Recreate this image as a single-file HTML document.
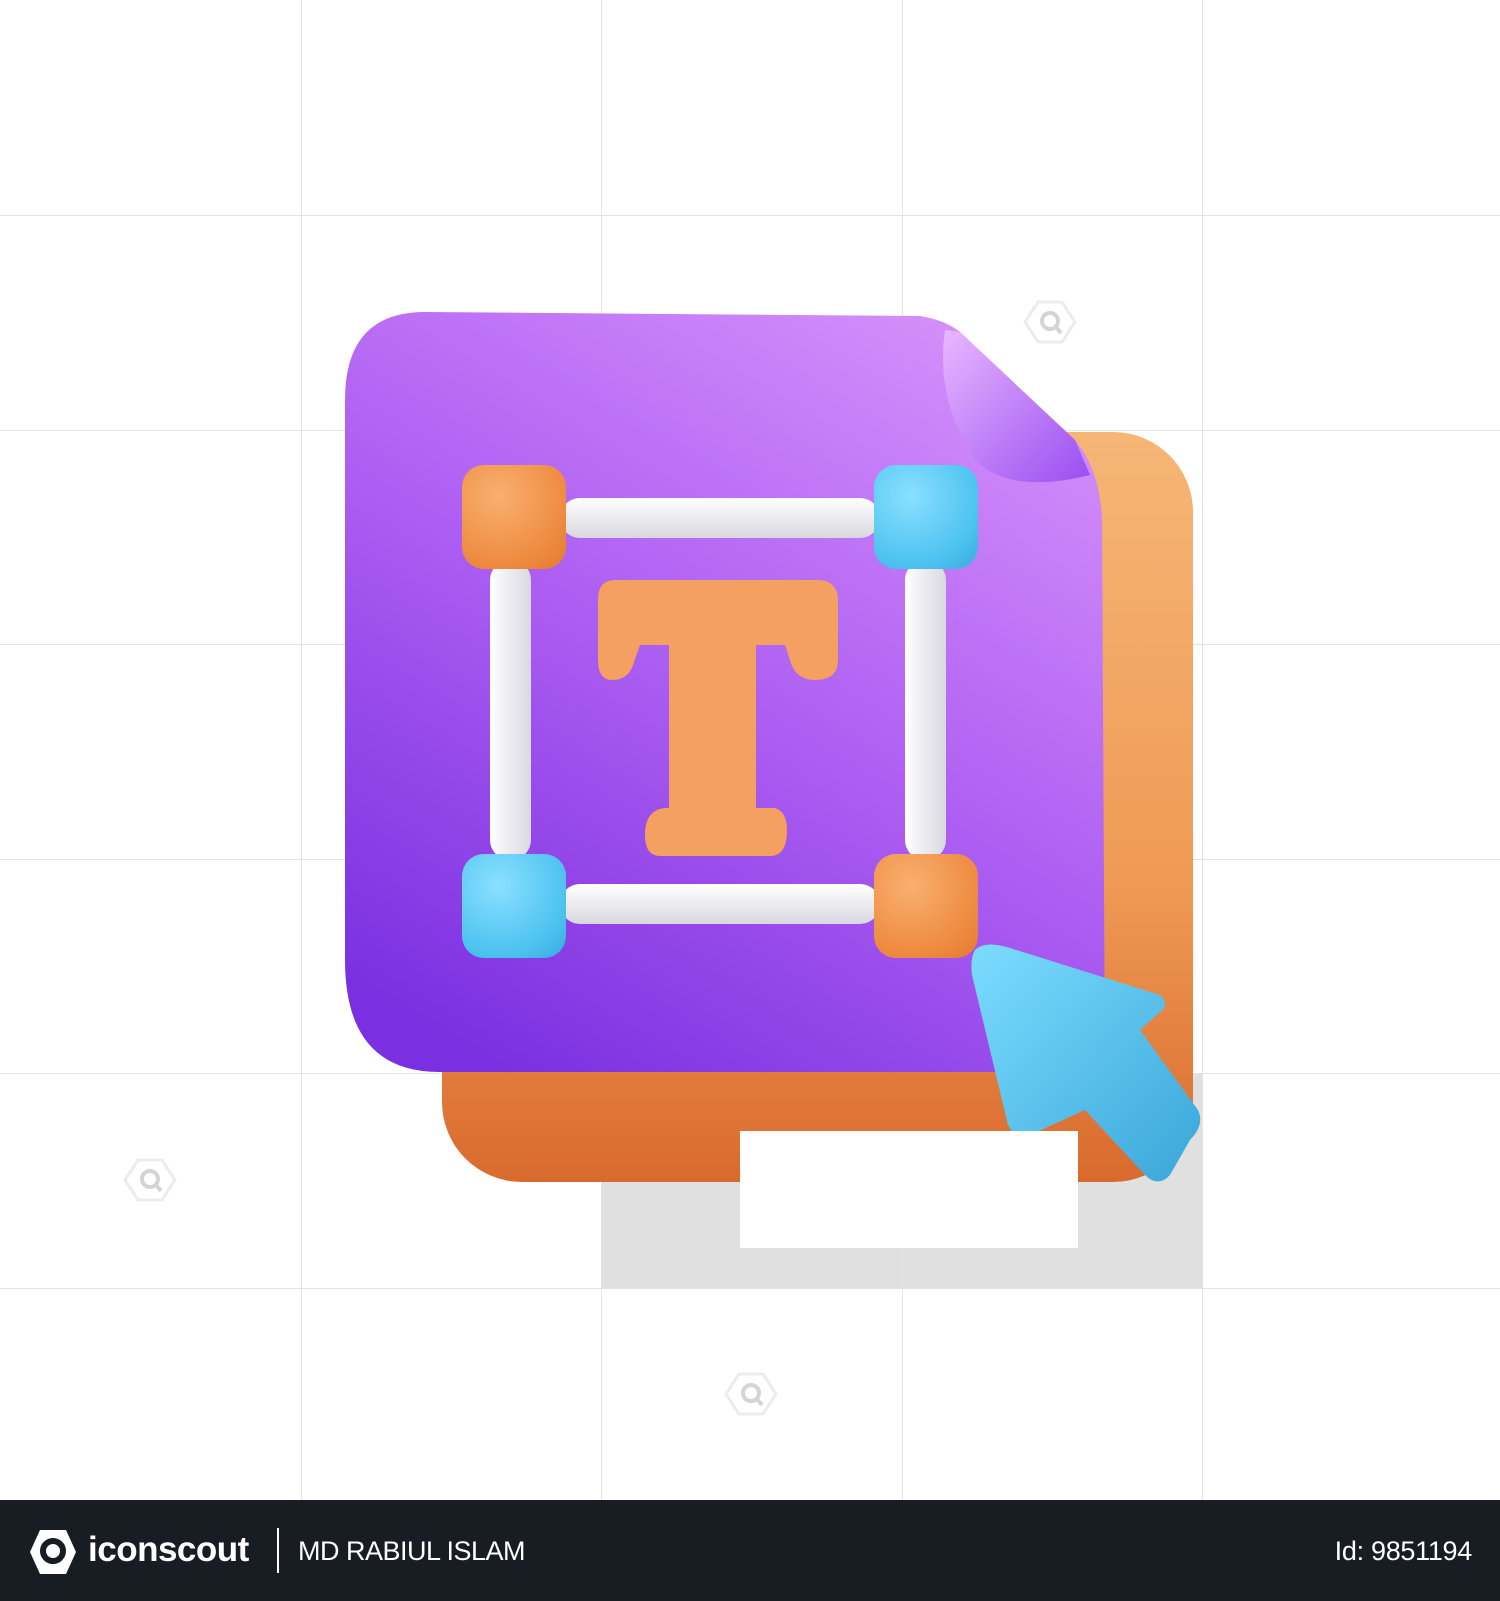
<!DOCTYPE html>
<html><head><meta charset="utf-8"><style>
html,body{margin:0;padding:0}
body{width:1500px;height:1601px;position:relative;overflow:hidden;background:#fff;font-family:"Liberation Sans",sans-serif}
.a{position:absolute}
.vl{position:absolute;top:0;height:1500px;width:1px;background:#e4e4e4}
.hl{position:absolute;left:0;width:1500px;height:1px;background:#e4e4e4}
.h{position:absolute;width:104px;height:104px;border-radius:22px}
.or{background:radial-gradient(circle at 35% 30%,#f9b070,#ee8a3f 70%,#e27a30)}
.bl{background:radial-gradient(circle at 35% 30%,#8ae0ff,#4cc2f0 70%,#39a8dc)}
</style></head><body>
<div class="a" style="left:601px;top:1073px;width:601px;height:215px;background:#e0e0e0"></div>
<div class="vl" style="left:301px"></div><div class="vl" style="left:601px"></div><div class="vl" style="left:902px"></div><div class="vl" style="left:1202px"></div>
<div class="hl" style="top:215px"></div><div class="hl" style="top:430px"></div><div class="hl" style="top:644px"></div><div class="hl" style="top:859px"></div><div class="hl" style="top:1073px"></div><div class="hl" style="top:1288px"></div>
<!-- watermarks -->
<svg class="a" style="left:0;top:0" width="1500" height="1500">
<g fill="#fff" stroke="#ececec" stroke-width="3">
<path d="M1038 302 L1062 302 L1075 322 L1062 342 L1038 342 L1025 322Z"/>
<path d="M138 1160 L162 1160 L175 1180 L162 1200 L138 1200 L125 1180Z"/>
<path d="M739 1374 L763 1374 L776 1394 L763 1414 L739 1414 L726 1394Z"/>
</g>
<g fill="none" stroke="#d4d4d4" stroke-width="4">
<circle cx="1050" cy="321" r="8"/><path d="M1056 327 L1061 333"/>
<circle cx="150" cy="1179" r="8"/><path d="M156 1185 L161 1191"/>
<circle cx="751" cy="1393" r="8"/><path d="M757 1399 L762 1405"/>
</g>
</svg>
<!-- orange back -->
<div class="a" style="left:442px;top:432px;width:751px;height:750px;border-radius:80px;background:linear-gradient(180deg,#f6b676,#ef9a55 60%,#d96a2e)"></div>
<svg class="a" style="left:0;top:0" width="1500" height="1500">
<defs>
<linearGradient id="pg" x1="0.8" y1="0" x2="0.2" y2="1"><stop offset="0" stop-color="#d590fa"/><stop offset="0.5" stop-color="#ad5ef2"/><stop offset="1" stop-color="#7a30e0"/></linearGradient>
<linearGradient id="cg" x1="0" y1="0" x2="1" y2="1"><stop offset="0" stop-color="#e8b8ff"/><stop offset="1" stop-color="#9a4ef0"/></linearGradient>
<linearGradient id="ag" x1="0" y1="0" x2="1" y2="1"><stop offset="0" stop-color="#7cdcff"/><stop offset="1" stop-color="#3aa6d8"/></linearGradient>
</defs>
<path d="M425 312 L920 316 Q945 320 960 332 L1075 440 Q1100 470 1102 520 L1105 1072 L440 1072 Q345 1072 345 960 L345 400 Q345 312 425 312Z" fill="url(#pg)"/>
<path d="M945 330 Q935 400 975 460 Q1010 495 1090 475 L1075 440 L960 332Z" fill="url(#cg)"/>
<path d="M975 950 Q985 940 1010 948 L1160 995 Q1170 1005 1160 1012 L1140 1030 L1198 1110 Q1205 1125 1190 1140 L1170 1175 Q1158 1188 1145 1175 L1085 1110 L1030 1135 Q1015 1140 1008 1125 L972 975 Q970 958 975 950Z" fill="url(#ag)"/>
</svg>
<div class="a" style="left:560px;top:498px;width:320px;height:40px;border-radius:20px;background:linear-gradient(#fff,#d8d8e0)"></div>
<div class="a" style="left:560px;top:884px;width:320px;height:40px;border-radius:20px;background:linear-gradient(#fff,#d8d8e0)"></div>
<div class="a" style="left:490px;top:560px;width:41px;height:300px;border-radius:20px;background:linear-gradient(90deg,#fff,#d8d8e0)"></div>
<div class="a" style="left:905px;top:560px;width:41px;height:300px;border-radius:20px;background:linear-gradient(90deg,#fff,#d8d8e0)"></div>
<div class="h or" style="left:462px;top:465px"></div>
<div class="h bl" style="left:874px;top:465px"></div>
<div class="h bl" style="left:462px;top:854px"></div>
<div class="h or" style="left:874px;top:854px"></div>
<svg class="a" style="left:0;top:0" width="1500" height="1500">
<path d="M615 580 L820 580 Q838 582 838 600 L838 660 Q838 680 815 680 Q795 680 790 660 L785 645 L756 645 L756 808 L775 808 Q787 812 787 830 Q787 856 770 856 L660 856 Q645 856 645 835 Q645 810 665 808 L669 808 L669 645 L640 645 L633 665 Q628 680 612 680 Q598 680 598 660 L598 600 Q598 580 615 580Z" fill="#f3a060"/>
</svg>
<div class="a" style="left:740px;top:1131px;width:338px;height:117px;background:#fff"></div>
<div class="a" style="left:0;top:1500px;width:1500px;height:101px;background:#181c23"></div>
<svg class="a" style="left:28px;top:1528px" width="50" height="48"><path d="M12 2 L38 2 L48 24 L38 46 L12 46 L2 24Z" fill="#fff"/><circle cx="25" cy="23" r="10" fill="none" stroke="#181c23" stroke-width="6"/></svg>
<div class="a" style="left:88px;top:1530px;color:#fff;font-size:35px;font-weight:bold;letter-spacing:-0.5px">iconscout</div>
<div class="a" style="left:277px;top:1528px;width:2px;height:45px;background:#fff"></div>
<div class="a" style="left:298px;top:1536px;color:#fff;font-size:27px;letter-spacing:-0.5px">MD RABIUL ISLAM</div>
<div class="a" style="right:28px;top:1536px;color:#fff;font-size:27px;letter-spacing:-0.3px">Id: 9851194</div>
</body></html>
